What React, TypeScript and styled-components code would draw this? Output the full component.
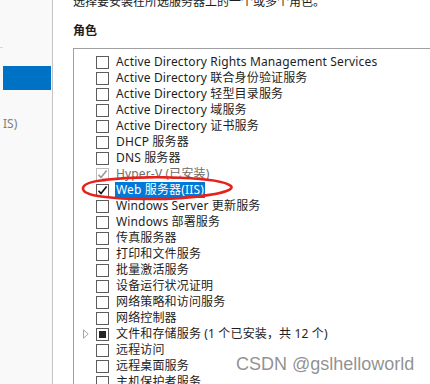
import React from "react";
import styled, { createGlobalStyle } from "styled-components";

const Global = createGlobalStyle`
  html, body { margin: 0; padding: 0; background: #ffffff; }
  body { width: 430px; height: 384px; overflow: hidden; }
  #root { width: 430px; height: 384px; }
`;

const FONT = `"Segoe UI", "Noto Sans", "Noto Sans CJK SC", sans-serif`;

const Page = styled.div`
  position: relative;
  display: flex;
  width: 430px;
  height: 384px;
  overflow: hidden;
  font-family: ${FONT};
  font-size: 12px;
  color: #1e1e1e;
`;

const LeftPane = styled.div`
  flex: 0 0 52px;
  display: flex;
  flex-direction: column;
  background: #f9f9f9;
  border-right: 1px solid #c4c4c4;
`;

const NavTick = styled.div`
  margin-top: 47px;
  width: 3px;
  height: 1px;
  background: #d8d8d8;
`;

const NavActive = styled.div`
  margin: 18px 1px 0 3px;
  height: 24px;
  background: #0072c6;
`;

const NavLabel = styled.div`
  margin-top: 26px;
  padding-left: 3px;
  line-height: 16px;
  color: #808080;
  white-space: nowrap;
`;

const Main = styled.div`
  flex: 1;
  display: flex;
  flex-direction: column;
  padding-left: 20px;
  min-width: 0;
`;

const Intro = styled.div`
  margin-top: -6px;
  line-height: 16px;
  white-space: nowrap;
`;

const Heading = styled.div`
  margin-top: 13px;
  line-height: 16px;
  font-weight: 700;
`;

const ListBox = styled.div`
  margin-top: 9px;
  flex: 1;
  border-left: 1px solid #a0a0a0;
  border-top: 1px solid #a0a0a0;
  padding-top: 5px;
  display: flex;
  flex-direction: column;
`;

const Row = styled.div`
  display: flex;
  align-items: center;
  height: 16px;
  white-space: nowrap;
`;

const Expander = styled.span`
  width: 22px;
  display: flex;
  justify-content: flex-start;
  padding-left: 9px;
  box-sizing: border-box;
`;

const Box = styled.span<{ $dim?: boolean }>`
  box-sizing: border-box;
  width: 13px;
  height: 13px;
  flex: 0 0 13px;
  border: 1px solid ${(p) => (p.$dim ? "#bcbcbc" : "#5c5c5c")};
  background: #ffffff;
  display: flex;
  align-items: center;
  justify-content: center;
`;

const Partial = styled.span`
  width: 7px;
  height: 7px;
  background: #262626;
`;

const Label = styled.span<{ $dim?: boolean; $sel?: boolean }>`
  line-height: 16px;
  letter-spacing: 0.15px;
  padding: 0 ${(p) => (p.$sel ? "1px" : "0")};
  margin-left: ${(p) => (p.$sel ? "6px" : "7px")};
  color: ${(p) => (p.$sel ? "#ffffff" : p.$dim ? "#6d6d6d" : "#1e1e1e")};
  background: ${(p) => (p.$sel ? "#0078d7" : "transparent")};
`;

const Ellipse = styled.svg`
  position: absolute;
  left: 80px;
  top: 176px;
  pointer-events: none;
`;

const Watermark = styled.div`
  position: absolute;
  left: 236px;
  top: 354px;
  font-family: "Liberation Sans", Arial, sans-serif;
  font-size: 18px;
  line-height: 20px;
  color: rgba(125, 125, 125, 0.85);
  text-shadow: 0 0 1px rgba(255, 255, 255, 0.9);
  white-space: nowrap;
`;

type State = "off" | "on" | "dim" | "partial";
type Item = { label: string; state?: State; expand?: boolean; sel?: boolean };

const items: Item[] = [
  { label: "Active Directory Rights Management Services" },
  { label: "Active Directory 联合身份验证服务" },
  { label: "Active Directory 轻型目录服务" },
  { label: "Active Directory 域服务" },
  { label: "Active Directory 证书服务" },
  { label: "DHCP 服务器" },
  { label: "DNS 服务器" },
  { label: "Hyper-V (已安装)", state: "dim" },
  { label: "Web 服务器(IIS)", state: "on", sel: true },
  { label: "Windows Server 更新服务" },
  { label: "Windows 部署服务" },
  { label: "传真服务器" },
  { label: "打印和文件服务" },
  { label: "批量激活服务" },
  { label: "设备运行状况证明" },
  { label: "网络策略和访问服务" },
  { label: "网络控制器" },
  { label: "文件和存储服务 (1 个已安装，共 12 个)", state: "partial", expand: true },
  { label: "远程访问" },
  { label: "远程桌面服务" },
  { label: "主机保护者服务" },
];

const Check = ({ color }: { color: string }) => (
  <svg width="11" height="11" viewBox="0 0 11 11">
    <path d="M1.5 5.8 L4 8.6 L9.6 1.6" fill="none" stroke={color} strokeWidth="1.6" />
  </svg>
);

const Arrow = () => (
  <svg width="6" height="10" viewBox="0 0 6 10">
    <path d="M0.5 0.8 L5.2 5 L0.5 9.2 Z" fill="none" stroke="#a6a6a6" strokeWidth="1" />
  </svg>
);

export default function App() {
  return (
    <>
      <Global />
      <Page>
        <LeftPane>
          <NavTick />
          <NavActive />
          <NavLabel>IS)</NavLabel>
        </LeftPane>
        <Main>
          <Intro>选择要安装在所选服务器上的一个或多个角色。</Intro>
          <Heading>角色</Heading>
          <ListBox>
            {items.map((it, i) => {
              const st = it.state ?? "off";
              return (
                <Row key={i}>
                  <Expander>{it.expand ? <Arrow /> : null}</Expander>
                  <Box $dim={st === "dim"}>
                    {st === "on" && <Check color="#111111" />}
                    {st === "dim" && <Check color="#9a9a9a" />}
                    {st === "partial" && <Partial />}
                  </Box>
                  <Label $dim={st === "dim"} $sel={it.sel}>
                    {it.label}
                  </Label>
                </Row>
              );
            })}
          </ListBox>
        </Main>
        <Ellipse width="156" height="26" viewBox="0 0 156 26">
          <path
            d="M22 4 C 70 -1, 140 1, 151 10 C 157 17, 110 23, 70 23 C 30 23, 2 20, 3 12 C 4 7, 14 5, 26 4"
            fill="none"
            stroke="#e5211b"
            strokeWidth="2.6"
          />
        </Ellipse>
        <Watermark>CSDN @gslhelloworld</Watermark>
      </Page>
    </>
  );
}
